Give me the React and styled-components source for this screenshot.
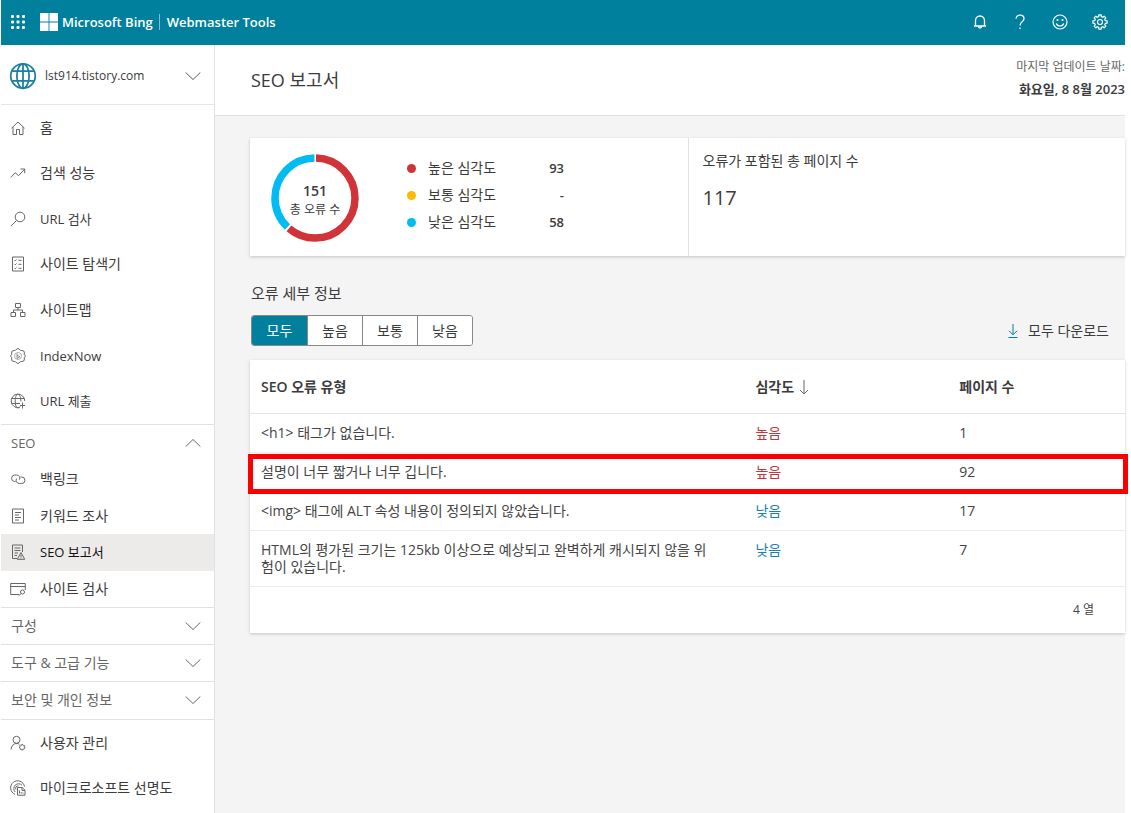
import React from "react";
import styled, { createGlobalStyle } from "styled-components";

const teal = "#00809d";
const red = "#d13438";
const blue = "#00bcf2";
const amber = "#ffb900";

const GlobalStyle = createGlobalStyle`
  *, *::before, *::after {
    box-sizing: border-box;
  }
  body {
    margin: 0;
    background: #fff;
    color: #3b3b3b;
    font-family: "Open Sans", "Noto Sans CJK KR", sans-serif;
    font-size: 14px;
    line-height: 20px;
  }
  button {
    font: inherit;
    color: inherit;
    cursor: pointer;
  }
  h1, h2, p, ul, dl, dd {
    margin: 0;
    padding: 0;
  }
  ul {
    list-style: none;
  }
`;

/* ---------- icons ---------- */

const Glyph = styled.svg.attrs({
  viewBox: "0 0 16 16",
  fill: "none",
  stroke: "currentColor",
  "aria-hidden": true
})`
  width: ${p => p.$size || 16}px;
  height: ${p => p.$size || 16}px;
  flex: none;
  stroke-width: ${p => p.$weight || 1};
`;

const gearPath = (cx, cy, outer, inner, teeth) => {
  const step = (Math.PI * 2) / teeth;
  const points = [];
  for (let i = 0; i < teeth; i++) {
    const a = i * step - Math.PI / 2;
    [
      [-0.22, outer],
      [0.22, outer],
      [0.3, inner],
      [0.7, inner]
    ].forEach(([t, r]) => {
      const x = cx + r * Math.cos(a + t * step);
      const y = cy + r * Math.sin(a + t * step);
      points.push(`${x.toFixed(2)} ${y.toFixed(2)}`);
    });
  }
  return `M${points.join("L")}Z`;
};

const icons = {
  home: <path d="M1.5 8.2 8 2l6.5 6.2M3 7v7.5h3.5v-5h3v5H13V7" />,
  trend: <path d="m.8 12.5 4.4-4.8 3.3 3 6-6.4M10.5 4h4.2v4.2" />,
  search: (
    <>
      <circle cx="10" cy="6" r="4.8" />
      <path d="M6.5 9.5.8 15.2" />
    </>
  ),
  explorer: (
    <>
      <path d="M2.5 1h11v14h-11z" />
      <path d="m4.5 4 .8.8L6.5 3.5M4.5 8l.8.8 1.2-1.3M4.5 12l.8.8 1.2-1.3M8.5 4.3h3M8.5 8.3h3M8.5 12.3h3" />
    </>
  ),
  sitemap: (
    <path d="M5.500 1.500h5v4h-5zM1 10.500h4.500v4H1zM10.500 10.500H15v4h-4.500zM8 5.500V8M3.500 10.500V8h9v2.500" />
  ),
  indexNow: (
    <>
      <path
        strokeLinejoin="round"
        d="M6.200 1.500Q8-.6 9.800 1.500Q10.300 2.800 11.900 2.500Q14.600 2.400 14.400 5Q13.700 6.400 14.900 7.100Q16 8 14.900 8.900Q13.700 9.600 14.400 11Q14.600 13.600 11.900 13.500Q10.300 13.200 9.800 14.500Q8 16.600 6.200 14.500Q5.700 13.200 4.100 13.500Q1.400 13.600 1.600 11Q2.300 9.600 1.100 8.900Q0 8 1.100 7.100Q2.300 6.400 1.600 5Q1.400 2.400 4.100 2.500Q5.700 2.800 6.200 1.500Z"
      />
      <circle cx="8" cy="8" r="3.5" opacity=".5" />
      <path d="M7 5.500v5L10 8.700 7 7.200" opacity=".7" />
    </>
  ),
  globeUp: (
    <>
      <path d="M14.800 8A6.800 6.800 0 1 0 9.500 14.600M5.200 8c0 9 4.300 7 5 5.500M10.800 8.500C11 5 9.800 1.200 8 1.200S5.200 4.500 5.200 8M1.800 5.500h12.400M1.800 10.500H10" />
      <path d="M12.500 9.500v6M10 12.500h5" />
    </>
  ),
  link: (
    <>
      <path d="M5.500 10.500H4.300a3.300 3.300 0 0 1 0-6.500h2.400a3.200 3.200 0 0 1 2.800 4.600" />
      <path d="M10.500 6h1.200a3.200 3.200 0 0 1 0 6.500H9.300a3.200 3.200 0 0 1-2.800-4.800" />
    </>
  ),
  keyword: <path d="M2.500 1h11v14h-11zM5 4.500h6M5 7h4M5 9.500h6M5 12h4" />,
  report: (
    <>
      <path d="M7 14.500H2.500V1h10v7M4.500 4h6M4.500 6.500h6M4.500 9H8M4.500 11.500H7" />
      <path d="m11 8.500-3.700 6.800h7.400zM11 10.800v2.200M11 13.500v1" />
    </>
  ),
  siteScan: (
    <>
      <path d="M9 13.500H.700v-11h14.600v6.500M.700 5.500h14.600" />
      <circle cx="12.500" cy="11" r="2" />
      <path d="m11 12.500-2.300 2.300" />
    </>
  ),
  users: (
    <>
      <circle cx="6.500" cy="4.800" r="3.500" />
      <path d="M1 14.500c.300-3.500 2.500-5.800 5.500-6.200 1.200.1 2 .400 2.800 1" />
      <path d={gearPath(12.2, 12.3, 2.8, 2.2, 8)} />
    </>
  ),
  clarity: (
    <>
      <path d="M5 14.300A7 7 0 1 1 14.500 6.500" />
      <path d="M5.200 12A4.800 4.800 0 1 1 12 5.200" />
      <path d="M6 9.500A2.300 2.300 0 0 1 8.500 6" />
      <path d="M7.500 7.500h4.700l2.800 2.800v4.900H7.500zM12 7.500v3h3M9.500 10.500v3M11.200 12v1.500M13 12.500v1" />
    </>
  )
};

const Icon = ({ name, size, weight }) => (
  <Glyph $size={size} $weight={weight}>
    {icons[name]}
  </Glyph>
);

const Chevron = ({ up }) => (
  <Glyph>
    <path d={up ? "M.7 11.500 8 4.500l7.300 7" : "M.7 4.500 8 11.500l7.300-7"} />
  </Glyph>
);

/* ---------- top bar ---------- */

const TopBar = styled.header`
  display: flex;
  align-items: center;
  height: 45px;
  padding: 0 17px 2px 9px;
  background: ${teal};
  color: #fff;
`;

const Waffle = styled.button`
  display: flex;
  padding: 0;
  border: 0;
  background: none;
  margin-right: 14px;
`;

const Brand = styled.a`
  display: flex;
  align-items: center;
  gap: 4px;
  color: inherit;
  font-size: 13px;
  font-weight: 600;
  text-decoration: none;
`;

const Product = styled.span`
  margin-left: 6px;
  padding-left: 7px;
  border-left: 1px solid #7fc0cf;
  font-size: 13px;
  font-weight: 600;
  line-height: 16px;
`;

const TopActions = styled.div`
  display: flex;
  gap: 24px;
  margin-left: auto;
`;

const TopAction = styled.button`
  display: flex;
  padding: 0;
  border: 0;
  background: none;
`;

const Header = () => (
  <TopBar>
    <Waffle aria-label="앱 시작 관리자">
      <Glyph>
        <g fill="currentColor" stroke="none">
          {[1, 6.5, 12].map(y =>
            [1, 6.5, 12].map(x => (
              <rect key={`${x}-${y}`} x={x} y={y} width="3" height="3" rx="1" />
            ))
          )}
        </g>
      </Glyph>
    </Waffle>
    <Brand href="#">
      <Glyph $size={18}>
        <path
          fill="currentColor"
          stroke="none"
          d="M0 0h7.600v7.600H0zM8.400 0H16v7.600H8.400zM0 8.400h7.600V16H0zM8.400 8.400H16V16H8.400z"
        />
      </Glyph>
      Microsoft Bing
    </Brand>
    <Product>Webmaster Tools</Product>
    <TopActions>
      <TopAction aria-label="알림">
        <Glyph $weight={1.3}>
          <path d="M3.500 12V6.500a4.500 4.500 0 0 1 9 0V12M2 12h12M6.500 12.500a1.500 1.500 0 0 0 3 0" />
        </Glyph>
      </TopAction>
      <TopAction aria-label="도움말">
        <Glyph $weight={1.3}>
          <path d="M4 4.800A4 4 0 0 1 8 1.200c2.300 0 4 1.400 4 3.500C12 7.800 8 7.800 8 11.500M8 13.500V15" />
        </Glyph>
      </TopAction>
      <TopAction aria-label="피드백">
        <Glyph $weight={1.2}>
          <circle cx="8" cy="8" r="7" />
          <path d="M4.300 9.500c1.300 3.300 6.100 3.300 7.400 0" />
          <g fill="currentColor" stroke="none">
            <circle cx="5.500" cy="6" r="1.100" />
            <circle cx="10.500" cy="6" r="1.100" />
          </g>
        </Glyph>
      </TopAction>
      <TopAction aria-label="설정">
        <Glyph $weight={1.2}>
          <path strokeLinejoin="round" d={gearPath(8, 8, 7.2, 5.5, 8)} />
          <circle cx="8" cy="8" r="2.500" />
        </Glyph>
      </TopAction>
    </TopActions>
  </TopBar>
);

/* ---------- sidebar ---------- */

const Sidebar = styled.nav`
  flex: none;
  width: 214px;
  border-right: 1px solid #e1e1e1;
  background: #fff;
`;

const SitePicker = styled.button`
  display: flex;
  align-items: center;
  gap: 8px;
  width: 100%;
  height: 60px;
  padding: 2px 13px 0 8px;
  border: 0;
  border-bottom: 1px solid #e5e5e5;
  background: none;
  color: #555;
`;

const SiteGlobe = styled(Glyph)`
  color: #1c7f9e;
`;

const SiteName = styled.span`
  flex: 1;
  font-size: 12px;
  color: #3b3b3b;
  text-align: left;
`;

const NavList = styled.ul`
  display: grid;
  grid-auto-rows: 1fr;
  min-height: ${p => p.$height}px;
`;

const NavLink = styled.a`
  display: flex;
  align-items: center;
  gap: 14px;
  height: 100%;
  padding: 0 9px;
  background: ${p => (p.$active ? "#edebe9" : "none")};
  color: ${p => (p.$active ? "#111" : "#3b3b3b")};
  font-size: ${p => (p.$latin ? 13 : 14)}px;
  text-decoration: none;

  svg {
    color: #666;
  }
`;

const SectionToggle = styled.button`
  display: flex;
  align-items: center;
  justify-content: space-between;
  width: 100%;
  height: 37px;
  padding: 0 13px 0 10px;
  border: 0;
  border-top: 1px solid #e1e1e1;
  background: none;
  color: #666;
  font-size: ${p => (p.$latin ? 13 : 14)}px;
`;

const NavFooter = styled.div`
  margin-top: 1px;
  border-top: 1px solid #e1e1e1;
`;

const NavItems = ({ items, height }) => (
  <NavList $height={height}>
    {items.map(({ icon, label, latin, active }) => (
      <li key={label}>
        <NavLink
          href="#"
          $active={active}
          $latin={latin}
          aria-current={active && "page"}
        >
          <Icon name={icon} />
          {label}
        </NavLink>
      </li>
    ))}
  </NavList>
);

const NavSection = ({ label, latin, open }) => (
  <SectionToggle $latin={latin} aria-expanded={!!open}>
    {label}
    <Chevron up={open} />
  </SectionToggle>
);

const mainItems = [
  { icon: "home", label: "홈" },
  { icon: "trend", label: "검색 성능" },
  { icon: "search", label: "URL 검사", latin: true },
  { icon: "explorer", label: "사이트 탐색기" },
  { icon: "sitemap", label: "사이트맵" },
  { icon: "indexNow", label: "IndexNow", latin: true },
  { icon: "globeUp", label: "URL 제출", latin: true }
];

const seoItems = [
  { icon: "link", label: "백링크" },
  { icon: "keyword", label: "키워드 조사" },
  { icon: "report", label: "SEO 보고서", latin: true, active: true },
  { icon: "siteScan", label: "사이트 검사" }
];

const footerItems = [
  { icon: "users", label: "사용자 관리" },
  { icon: "clarity", label: "마이크로소프트 선명도" }
];

const Navigation = () => (
  <Sidebar>
    <SitePicker>
      <SiteGlobe $size={28}>
        <circle cx="8" cy="8" r="7" />
        <ellipse cx="8" cy="8" rx="3.500" ry="7" />
        <path d="M1.800 5.200h12.400M1.800 10.800h12.400M8 1v14" />
      </SiteGlobe>
      <SiteName>lst914.tistory.com</SiteName>
      <Chevron />
    </SitePicker>
    <NavItems items={mainItems} height={319} />
    <NavSection label="SEO" latin open />
    <NavItems items={seoItems} height={146} />
    <NavSection label="구성" />
    <NavSection label="도구 & 고급 기능" />
    <NavSection label="보안 및 개인 정보" />
    <NavFooter>
      <NavItems items={footerItems} height={91} />
    </NavFooter>
  </Sidebar>
);

/* ---------- report ---------- */

const Page = styled.div`
  display: flex;
  flex-direction: column;
  min-height: 100vh;
  padding: 0 6px 0 1px;
`;

const Body = styled.div`
  display: flex;
  flex: 1;
`;

const Main = styled.main`
  flex: 1;
  min-width: 0;
  background: #f4f4f4;
`;

const TitleBar = styled.div`
  display: flex;
  justify-content: space-between;
  align-items: center;
  height: 71px;
  padding-left: 36px;
  border-bottom: 1px solid #e1e1e1;
  background: #fff;
`;

const Title = styled.h1`
  font-size: 18px;
  font-weight: 400;
  line-height: 24px;
`;

const Updated = styled.div`
  display: grid;
  gap: 2px;
  padding-bottom: 4px;
  text-align: right;
`;

const UpdatedLabel = styled.span`
  font-size: 12px;
  color: #666;
`;

const UpdatedDate = styled.span`
  font-size: 13px;
  font-weight: 600;
`;

const Content = styled.div`
  padding: 22px 0 22px 35px;
`;

const Card = styled.section`
  background: #fff;
  box-shadow: 0 1px 3px rgba(0, 0, 0, 0.2);
`;

const Summary = styled(Card)`
  display: grid;
  grid-template-columns: 1fr 1fr;
  min-height: 118px;
`;

const SummaryErrors = styled.div`
  display: flex;
  align-items: center;
  padding-left: 21px;
`;

const SummaryPages = styled.div`
  padding: 13px 14px;
  border-left: 1px solid #e1e1e1;
`;

const PageTotal = styled.p`
  margin-top: 12px;
  font-size: 20px;
  line-height: 30px;
`;

const DonutBox = styled.div`
  display: grid;
  place-items: center;
  margin-top: 2px;
  margin-right: 48px;

  & > * {
    grid-area: 1 / 1;
  }
`;

const DonutSvg = styled.svg`
  width: 88px;
  height: 88px;
`;

const DonutLabel = styled.div`
  display: grid;
  gap: 2px;
  padding-top: 6px;
  text-align: center;
`;

const DonutValue = styled.span`
  font-weight: 600;
  line-height: 16px;
`;

const DonutCaption = styled.span`
  font-size: 12px;
  line-height: 18px;
`;

const Donut = ({ high, low }) => {
  const r = 40;
  const length = 2 * Math.PI * r;
  const highLength = (high / (high + low)) * length;
  const gap = 1;
  return (
    <DonutBox>
      <DonutSvg viewBox="0 0 88 88" role="img" aria-label="오류 분포">
        <g fill="none" strokeWidth="7.5" transform="rotate(-90 44 44)">
          <circle
            cx="44"
            cy="44"
            r={r}
            stroke={red}
            strokeDasharray={`${highLength - gap * 2} ${length}`}
            strokeDashoffset={-gap}
          />
          <circle
            cx="44"
            cy="44"
            r={r}
            stroke={blue}
            strokeDasharray={`${length - highLength - gap * 2} ${length}`}
            strokeDashoffset={-highLength - gap}
          />
        </g>
      </DonutSvg>
      <DonutLabel>
        <DonutValue>{high + low}</DonutValue>
        <DonutCaption>총 오류 수</DonutCaption>
      </DonutLabel>
    </DonutBox>
  );
};

const Legend = styled.dl`
  display: grid;
  gap: 7px;
  padding-bottom: 4px;
`;

const LegendRow = styled.div`
  display: flex;
  width: 157px;
`;

const LegendName = styled.dt`
  display: flex;
  align-items: center;
  flex: 1;
  gap: 12px;

  &::before {
    content: "";
    width: 9px;
    height: 9px;
    border-radius: 50%;
    background: ${p => p.$color};
  }
`;

const LegendValue = styled.dd`
  font-size: 13px;
  font-weight: 600;
`;

const SectionTitle = styled.h2`
  margin: 26px 0 11px 1px;
  font-size: 15px;
  font-weight: 400;
  line-height: 22px;
`;

const Toolbar = styled.div`
  display: flex;
  align-items: center;
  justify-content: space-between;
  margin-bottom: 14px;
  padding: 0 16px 0 1px;
`;

const FilterGroup = styled.div`
  display: flex;
  border: 1px solid #8a8886;
  border-radius: 3px;
  background: #fff;
  overflow: hidden;
`;

const Filter = styled.button`
  width: 55px;
  height: 29px;
  padding: 0;
  border: 0;
  background: ${p => (p.$active ? teal : "#fff")};
  color: ${p => (p.$active ? "#fff" : "#3b3b3b")};

  & + & {
    border-left: 1px solid #8a8886;
  }
`;

const Download = styled.button`
  display: flex;
  align-items: center;
  gap: 7px;
  padding: 0;
  border: 0;
  background: none;

  svg {
    color: ${teal};
  }
`;

const Table = styled.table`
  width: 100%;
  border-collapse: separate;
  border-spacing: 0;
  table-layout: fixed;
`;

const HeadCell = styled.th`
  width: ${p => p.$width};
  height: 54px;
  padding: 0 11px;
  border-bottom: 1px solid #e5e5e5;
  font-weight: 600;
  text-align: left;
`;

const SortLabel = styled.span`
  display: inline-flex;
  align-items: center;
  gap: 2px;

  svg {
    color: #666;
  }
`;

const Cell = styled.td`
  padding: 10px 11px 11px;
  border-bottom: 1px solid #ededed;
  color: ${p => p.$color || "#444"};
  line-height: 17px;
  vertical-align: top;

  &:first-child {
    padding-right: 37px;
  }
`;

const Row = styled.tr`
  position: relative;

  & > ${Cell}:last-child::after {
    content: "";
    display: ${p => (p.$marked ? "block" : "none")};
    position: absolute;
    inset: 1px -3px -2px -2px;
    border: 5px solid #fb0000;
    pointer-events: none;
  }
`;

const TableFooter = styled.p`
  padding: 13px 31px;
  font-size: 12px;
  color: #444;
  text-align: right;
`;

const severities = [
  { label: "높은 심각도", value: 93, color: red },
  { label: "보통 심각도", value: "-", color: amber },
  { label: "낮은 심각도", value: 58, color: blue }
];

const filters = ["모두", "높음", "보통", "낮음"];

const levelColors = { 높음: "#c5363c", 낮음: "#1a7fb8" };

const errors = [
  { type: "<h1> 태그가 없습니다.", level: "높음", pages: 1 },
  {
    type: "설명이 너무 짧거나 너무 깁니다.",
    level: "높음",
    pages: 92,
    marked: true
  },
  {
    type: "<img> 태그에 ALT 속성 내용이 정의되지 않았습니다.",
    level: "낮음",
    pages: 17
  },
  {
    type:
      "HTML의 평가된 크기는 125kb 이상으로 예상되고 완벽하게 캐시되지 않을 위험이 있습니다.",
    level: "낮음",
    pages: 7
  }
];

const ErrorTable = () => (
  <Card>
    <Table>
      <thead>
        <tr>
          <HeadCell $width="56.5%">SEO 오류 유형</HeadCell>
          <HeadCell $width="23.3%">
            <SortLabel>
              심각도
              <Glyph>
                <path d="M8 1v14M4 11l4 4 4-4" />
              </Glyph>
            </SortLabel>
          </HeadCell>
          <HeadCell>페이지 수</HeadCell>
        </tr>
      </thead>
      <tbody>
        {errors.map(({ type, level, pages, marked }) => (
          <Row key={type} $marked={marked}>
            <Cell>{type}</Cell>
            <Cell $color={levelColors[level]}>{level}</Cell>
            <Cell>{pages}</Cell>
          </Row>
        ))}
      </tbody>
    </Table>
    <TableFooter>4 열</TableFooter>
  </Card>
);

export default () => (
  <Page>
    <GlobalStyle />
    <Header />
    <Body>
      <Navigation />
      <Main>
        <TitleBar>
          <Title>SEO 보고서</Title>
          <Updated>
            <UpdatedLabel>마지막 업데이트 날짜:</UpdatedLabel>
            <UpdatedDate>화요일, 8 8월 2023</UpdatedDate>
          </Updated>
        </TitleBar>
        <Content>
          <Summary>
            <SummaryErrors>
              <Donut high={93} low={58} />
              <Legend>
                {severities.map(({ label, value, color }) => (
                  <LegendRow key={label}>
                    <LegendName $color={color}>{label}</LegendName>
                    <LegendValue>{value}</LegendValue>
                  </LegendRow>
                ))}
              </Legend>
            </SummaryErrors>
            <SummaryPages>
              <p>오류가 포함된 총 페이지 수</p>
              <PageTotal>117</PageTotal>
            </SummaryPages>
          </Summary>
          <SectionTitle>오류 세부 정보</SectionTitle>
          <Toolbar>
            <FilterGroup role="group" aria-label="심각도">
              {filters.map((label, i) => (
                <Filter key={label} $active={i === 0} aria-pressed={i === 0}>
                  {label}
                </Filter>
              ))}
            </FilterGroup>
            <Download>
              <Glyph>
                <path d="M8 1v10.500M4 7.800l4 4 4-4M3.500 14.500h9" />
              </Glyph>
              모두 다운로드
            </Download>
          </Toolbar>
          <ErrorTable />
        </Content>
      </Main>
    </Body>
  </Page>
);
